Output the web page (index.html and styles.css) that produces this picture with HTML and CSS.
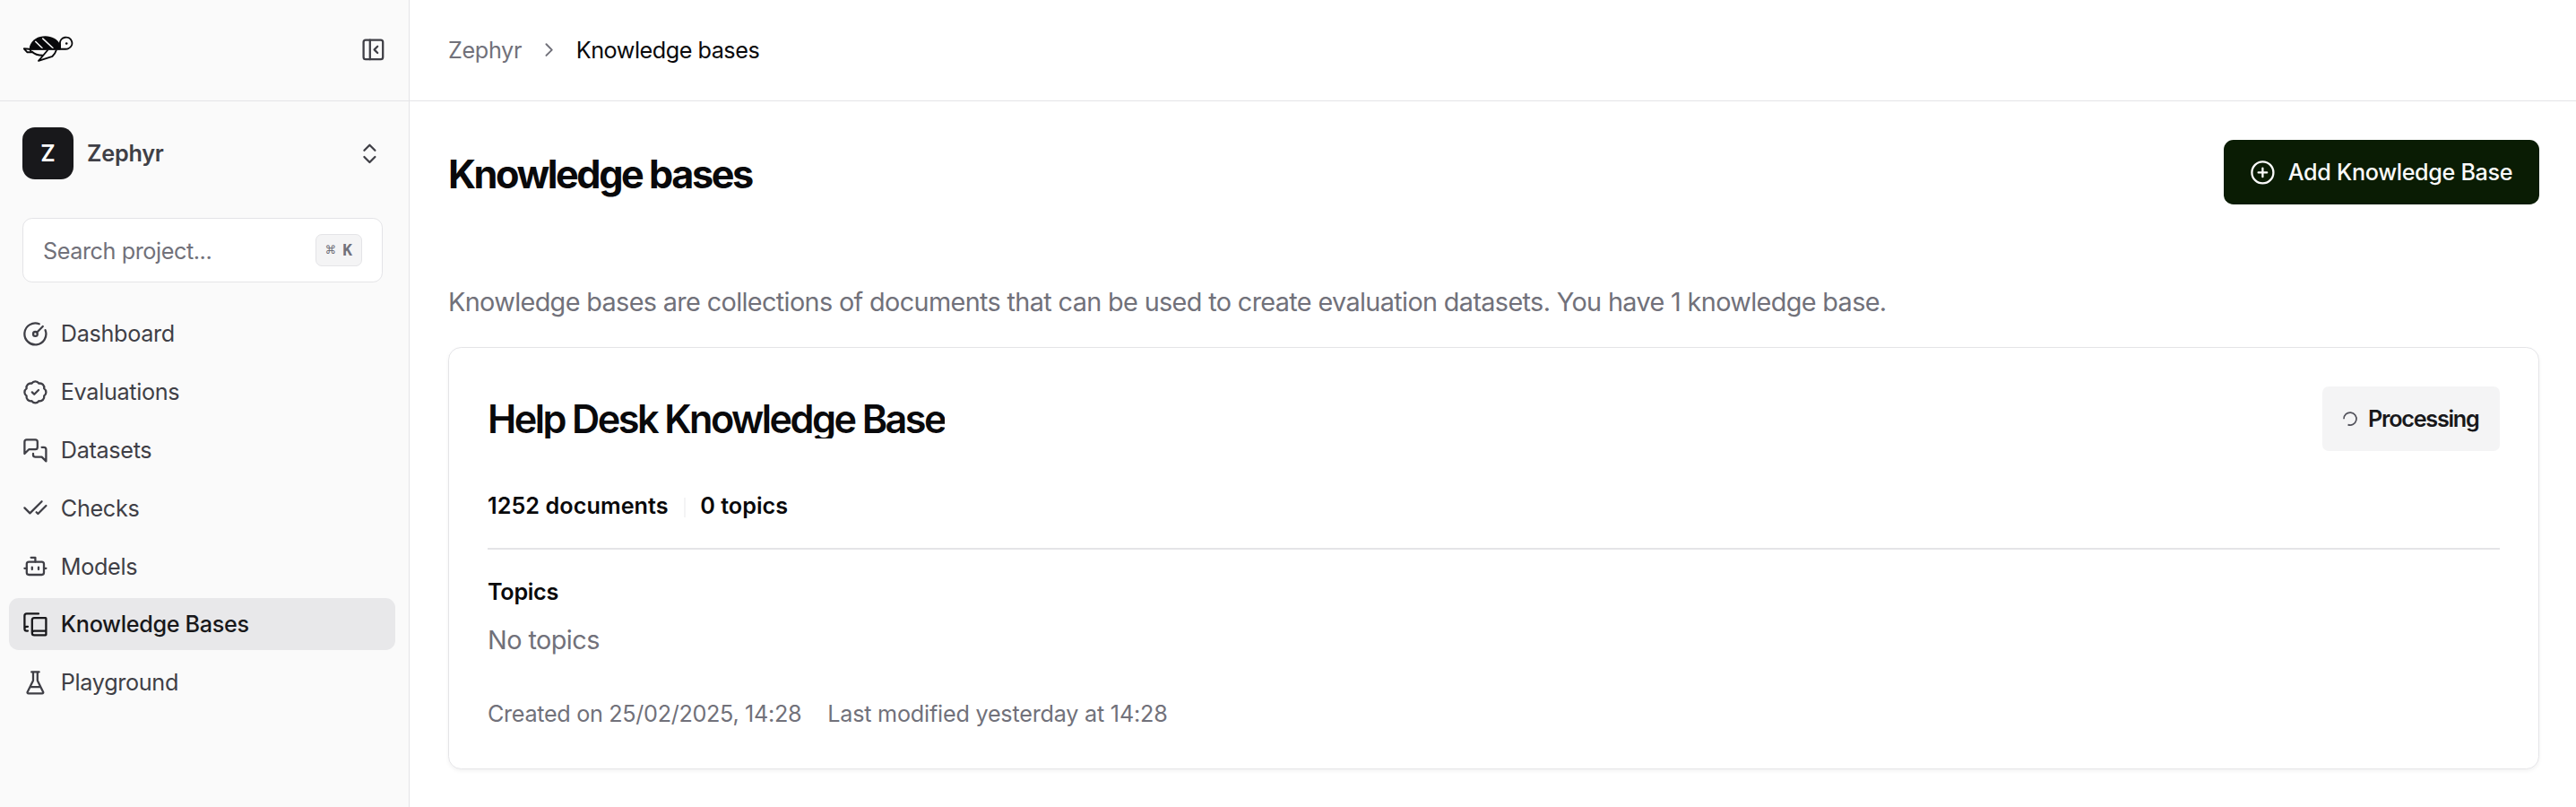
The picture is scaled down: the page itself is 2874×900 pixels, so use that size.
FILE: index.html
```html
<!DOCTYPE html>
<html lang="en">
<head>
<meta charset="utf-8">
<title>Knowledge bases</title>
<link rel="stylesheet" href="styles.css">
</head>
<body>
<div class="app">
  <aside class="sidebar">
    <div class="sidebar-top">
      <svg class="logo" viewBox="0 0 56 30" fill="none" stroke="#09090b" stroke-width="1.9" stroke-linejoin="round">
        <path d="M7 15.500V12C9.500 4 16.500 .2 24.500 .2C32 .3 38 3.500 41.500 10V15.500Z" fill="#09090b" stroke="none"/>
        <path d="M13.300 6L21.500 14M21.300 2.700L33.500 14" stroke="#fafafa" stroke-width="1.600"/>
        <path d="M41 14.700V8.800A6.700 6.500 0 1 1 50.500 14C49.500 14.600 48.500 14.700 47 14.700H7L.8 14.300L4.500 18.300H9.500L7 15"/>
        <path d="M9.500 17.500C12.500 20.500 17 22 22.500 21.800M27.500 15.500L22 22L17 27.800L32.500 22.800Q35.500 20 37 15.500"/>
        <circle cx="48.200" cy="8.500" r="1.300" fill="#09090b" stroke="none"/>
      </svg>
      <svg class="icon" viewBox="0 0 24 24"><rect width="18" height="18" x="3" y="3" rx="2"/><path d="M9 3v18M16 15l-3-3 3-3"/></svg>
    </div>
    <div class="project">
      <span class="avatar">Z</span>
      <span class="project-name">Zephyr</span>
      <svg class="icon" viewBox="0 0 24 24"><path d="m7 15 5 5 5-5M7 9l5-5 5 5"/></svg>
    </div>
    <div class="search">
      <span class="search-text">Search project...</span>
      <kbd class="kbd"><span class="cmd">⌘</span><span>K</span></kbd>
    </div>
    <nav class="nav">
      <a class="nav-item"><svg class="icon" viewBox="0 0 24 24"><path d="M15.600 2.700a10 10 0 1 0 5.700 5.700"/><circle cx="12" cy="12" r="2"/><path d="M13.400 10.600 19 5"/></svg><span>Dashboard</span></a>
      <a class="nav-item"><svg class="icon" viewBox="0 0 24 24"><path d="M3.850 8.620a4 4 0 0 1 4.780-4.770 4 4 0 0 1 6.740 0 4 4 0 0 1 4.780 4.780 4 4 0 0 1 0 6.740 4 4 0 0 1-4.770 4.780 4 4 0 0 1-6.750 0 4 4 0 0 1-4.780-4.770 4 4 0 0 1 0-6.760Z"/><path d="m9 12 2 2 4-4"/></svg><span>Evaluations</span></a>
      <a class="nav-item"><svg class="icon" viewBox="0 0 24 24"><path d="M14 9a2 2 0 0 1-2 2H6l-4 4V4a2 2 0 0 1 2-2h8a2 2 0 0 1 2 2zM18 9h2a2 2 0 0 1 2 2v11l-4-4h-6a2 2 0 0 1-2-2v-1"/></svg><span>Datasets</span></a>
      <a class="nav-item"><svg class="icon" viewBox="0 0 24 24"><path d="M18 6 7 17l-5-5M22 10l-7.500 7.500L13 16"/></svg><span>Checks</span></a>
      <a class="nav-item"><svg class="icon" viewBox="0 0 24 24"><path d="M12 8V4H8"/><rect width="16" height="12" x="4" y="8" rx="2"/><path d="M2 14h2M20 14h2M15 13v2M9 13v2"/></svg><span>Models</span></a>
      <a class="nav-item active"><svg class="icon" viewBox="0 0 24 24"><path d="M2 16V4a2 2 0 0 1 2-2h11M22 18H11a2 2 0 1 0 0 4h10.500a.5.5 0 0 0 .5-.5v-15a.5.5 0 0 0-.5-.5H11a2 2 0 0 0-2 2v12M5 14H4a2 2 0 1 0 0 4h1"/></svg><span>Knowledge Bases</span></a>
      <a class="nav-item"><svg class="icon" viewBox="0 0 24 24"><path d="M10 2v7.527a2 2 0 0 1-.211.896L4.720 20.550a1 1 0 0 0 .9 1.450h12.760a1 1 0 0 0 .9-1.450l-5.069-10.127A2 2 0 0 1 14 9.527V2M8.500 2h7M7 16h10"/></svg><span>Playground</span></a>
    </nav>
  </aside>
  <main class="main">
    <header class="topbar">
      <span class="crumb">Zephyr</span>
      <svg class="icon crumb-sep" viewBox="0 0 24 24"><path d="m9 18 6-6-6-6"/></svg>
      <span class="crumb current">Knowledge bases</span>
    </header>
    <div class="content">
      <div class="page-head">
        <h1 class="page-title">Knowledge bases</h1>
        <button class="add-button"><svg class="icon" viewBox="0 0 24 24"><circle cx="12" cy="12" r="10"/><path d="M8 12h8M12 8v8"/></svg><span>Add Knowledge Base</span></button>
      </div>
      <p class="intro">Knowledge bases are collections of documents that can be used to create evaluation datasets. You have 1 knowledge base.</p>
      <section class="card">
        <div class="card-head">
          <h2 class="card-title">Help Desk Knowledge Base</h2>
          <div class="badge"><svg class="spinner" viewBox="0 0 18 18"><path d="M2 9.300A7 7 0 1 1 6.500 15.600"/></svg><span>Processing</span></div>
        </div>
        <div class="stats"><span class="documents">1252 documents</span><span class="stat-sep"></span><span>0 topics</span></div>
        <hr class="divider">
        <h3 class="topics-title">Topics</h3>
        <p class="topics-empty">No topics</p>
        <div class="meta"><span class="created">Created on 25/02/2025, 14:28</span><span class="modified">Last modified yesterday at 14:28</span></div>
      </section>
    </div>
  </main>
</div>
</body>
</html>
```
FILE: styles.css
```css
* { box-sizing: border-box; }
body { margin: 0; background: #fff; color: #09090b; font: 400 25.2px/36px Inter, "Open Sans", sans-serif; }
h1, h2, h3, p { margin: 0; }
.app { display: flex; height: 900px; overflow: hidden; }
.icon { width: 28.8px; height: 28.8px; flex: none; fill: none; stroke: currentColor; stroke-width: 1.9; stroke-linecap: round; stroke-linejoin: round; }

.sidebar { width: 457px; flex: none; background: #fafafa; border-right: 1px solid #e4e4e7; color: #3f3f46; }
.sidebar-top { height: 113px; padding: 0 25px 2px; border-bottom: 1px solid #e4e4e7; display: flex; align-items: center; justify-content: space-between; }
.logo { width: 56px; height: 30px; margin-left: 1px; }
.project { display: flex; align-items: center; height: 58px; margin: 29px 29px 0 25px; }
.avatar { width: 57px; height: 58px; border-radius: 14px; background: #18181b; color: #fff; font-weight: 600; display: grid; place-items: center; }
.project-name { flex: 1; margin-left: 15px; font-weight: 600; letter-spacing: -.2px; }
.search { display: flex; align-items: center; justify-content: space-between; height: 72px; margin: 43px 29px 0 25px; padding: 2px 22px 0; background: #fff; border: 1px solid #e4e4e7; border-radius: 10.8px; color: #71717a; letter-spacing: -.42px; }
.kbd { width: 52px; height: 36px; margin-top: -2px; border: 1px solid #e4e4e7; border-radius: 7px; background: #f4f4f5; display: flex; align-items: center; justify-content: center; gap: 7px; font: 700 18px/18px "DejaVu Sans Mono", monospace; letter-spacing: 0; color: #71717a; }
.cmd { font: 400 12.5px/18px "DejaVu Sans", sans-serif; }
.nav { display: flex; flex-direction: column; gap: 6.8px; margin: 28.4px 15px 0 10px; }
.nav-item { display: flex; align-items: center; gap: 14px; height: 58px; padding: 0 15px; border-radius: 10.8px; letter-spacing: -.32px; }
.nav-item.active { background: #e8e8ea; color: #18181b; font-weight: 500; }

.main { flex: 1; min-width: 0; }
.topbar { height: 113px; padding: 0 43px 1px; border-bottom: 1px solid #e4e4e7; display: flex; align-items: center; }
.crumb { color: #71717a; letter-spacing: -.35px; }
.crumb.current { color: #09090b; letter-spacing: -.47px; }
.crumb-sep { width: 25.2px; height: 25.2px; margin: 0 17.5px 0 18px; color: #71717a; }
.content { padding: 43px 41px 0 43px; }
.page-head { display: flex; align-items: center; justify-content: space-between; height: 72px; }
.page-title { padding-top: 4px; font-size: 43.2px; line-height: 48px; font-weight: 700; letter-spacing: -2.44px; }
.add-button { display: flex; align-items: center; gap: 14px; height: 72px; width: 352px; padding: 0 29px; border: 0; border-radius: 10.8px; background: #0a1c04; color: #fafafa; font: 500 25.2px/36px Inter, sans-serif; letter-spacing: -.35px; white-space: nowrap; }
.intro { margin-top: 87px; font-size: 28.8px; line-height: 43px; color: #71717a; letter-spacing: -.635px; }
.card { margin-top: 29px; height: 471px; padding: 43px; border: 1px solid #e4e4e7; border-radius: 14.4px; box-shadow: 0 2px 4px rgba(0, 0, 0, .05); }
.card-head { display: flex; align-items: center; justify-content: space-between; height: 72px; }
.card-title { padding-top: 1px; font-size: 43.2px; line-height: 43.2px; height: 43.2px; overflow: hidden; font-weight: 600; letter-spacing: -2.55px; }
.badge { display: flex; align-items: center; gap: 11px; width: 198px; height: 72px; padding: 0 22px; border-radius: 7px; background: #f4f4f5; color: #18181b; font-weight: 600; letter-spacing: -1.25px; }
.spinner { width: 18px; height: 18px; flex: none; fill: none; stroke: #52525b; stroke-width: 1.7; }
.stats { display: flex; align-items: center; margin-top: 43px; height: 36px; font-weight: 600; }
.documents { letter-spacing: .06px; }
.stat-sep { width: 2px; height: 22px; margin: 4px 16.5px 0 17px; background: #f4f4f5; }
.divider { height: 2px; margin: 29px 0 0; border: 0; background: #e4e4e7; }
.topics-title { margin-top: 29px; font-size: 25.2px; line-height: 36px; font-weight: 600; letter-spacing: -.3px; }
.topics-empty { margin-top: 14px; font-size: 28.8px; line-height: 43px; color: #71717a; letter-spacing: -.55px; }
.meta { display: flex; gap: 29px; margin-top: 43px; color: #71717a; }
.created { letter-spacing: -.32px; }
.modified { letter-spacing: -.22px; }
```
